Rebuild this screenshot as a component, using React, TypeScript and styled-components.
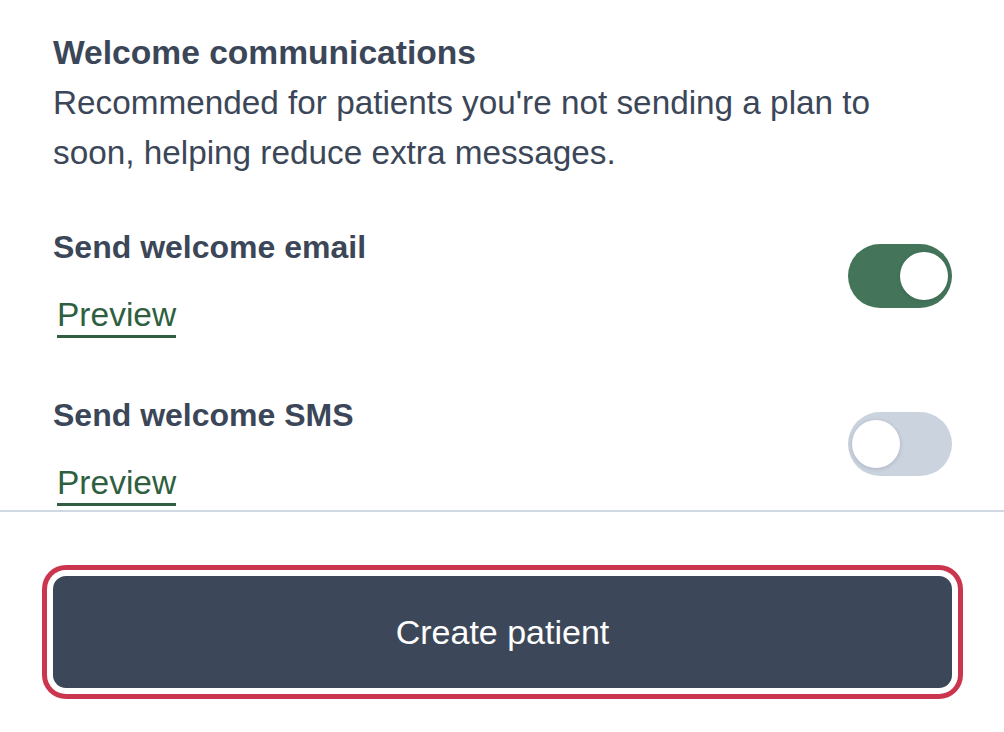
import React, { useState } from 'react';
import styled, { createGlobalStyle } from 'styled-components';

const GlobalStyle = createGlobalStyle`
  html, body {
    margin: 0;
    padding: 0;
    background: #ffffff;
  }
  body {
    font-family: 'Liberation Sans', Arial, sans-serif;
    color: #3b4758;
  }
`;

const Page = styled.div`
  width: 1004px;
  height: 732px;
  display: flex;
  flex-direction: column;
  overflow: hidden;
`;

const Body = styled.div`
  height: 510px;
  padding: 28px 52px 0 53px;
  box-sizing: border-box;
  overflow: hidden;
`;

const Heading = styled.h2`
  margin: 0;
  font-size: 33.6px;
  line-height: 50px;
  font-weight: 700;
  color: #3b4758;
`;

const Description = styled.p`
  margin: 0;
  max-width: 860px;
  font-size: 33.3px;
  line-height: 50px;
  font-weight: 400;
  color: #3b4758;
`;

const OptionList = styled.div`
  display: flex;
  flex-direction: column;
  gap: 52px;
  margin-top: 44px;
`;

const OptionRow = styled.div`
  display: flex;
  justify-content: space-between;
  align-items: flex-start;
`;

const OptionText = styled.div`
  display: flex;
  flex-direction: column;
  align-items: flex-start;
`;

const OptionTitle = styled.div`
  font-size: 32px;
  line-height: 50px;
  font-weight: 700;
`;

const PreviewLink = styled.a`
  margin: 23px 0 0 4px;
  font-size: 33.5px;
  line-height: 40px;
  color: #2f5f40;
  text-decoration: none;
  border-bottom: 3px solid #2f5f40;
  cursor: pointer;
`;

const Track = styled.button<{ $on: boolean }>`
  margin-top: 22px;
  width: 104px;
  height: 64px;
  border: none;
  border-radius: 32px;
  padding: 8px 4px;
  display: flex;
  justify-content: ${p => (p.$on ? 'flex-end' : 'flex-start')};
  background: ${p => (p.$on ? '#44755a' : '#cbd3df')};
  cursor: pointer;
`;

const Knob = styled.span`
  width: 48px;
  height: 48px;
  border-radius: 50%;
  background: #ffffff;
  box-shadow: 0 1px 4px rgba(30, 41, 59, 0.18);
`;

const Footer = styled.div`
  border-top: 2px solid #d0d8e3;
  padding: 64px 52px 0 53px;
`;

const CreateButton = styled.button`
  width: 100%;
  height: 112px;
  border: none;
  border-radius: 13px;
  background: #3c4859;
  color: #ffffff;
  font-family: 'Liberation Sans', Arial, sans-serif;
  font-size: 34px;
  font-weight: 400;
  cursor: pointer;
  box-shadow: 0 0 0 6px #ffffff, 0 0 0 11px #cb364f;
`;

const App: React.FC = () => {
  const [email, setEmail] = useState(true);
  const [sms, setSms] = useState(false);

  const options = [
    { key: 'email', label: 'Send welcome email', on: email, toggle: () => setEmail(!email) },
    { key: 'sms', label: 'Send welcome SMS', on: sms, toggle: () => setSms(!sms) },
  ];

  return (
    <Page>
      <GlobalStyle />
      <Body>
        <Heading>Welcome communications</Heading>
        <Description>
          Recommended for patients you're not sending a plan to soon, helping reduce extra messages.
        </Description>
        <OptionList>
          {options.map(o => (
            <OptionRow key={o.key}>
              <OptionText>
                <OptionTitle>{o.label}</OptionTitle>
                <PreviewLink>Preview</PreviewLink>
              </OptionText>
              <Track $on={o.on} onClick={o.toggle} aria-pressed={o.on}>
                <Knob />
              </Track>
            </OptionRow>
          ))}
        </OptionList>
      </Body>
      <Footer>
        <CreateButton>Create patient</CreateButton>
      </Footer>
    </Page>
  );
};

export default App;
